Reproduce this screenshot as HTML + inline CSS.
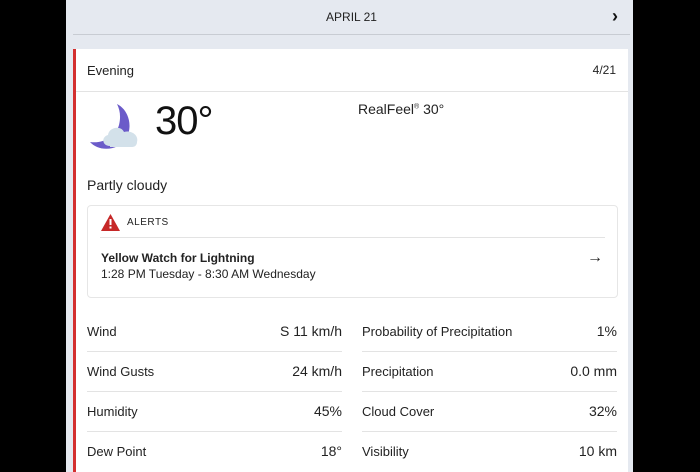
<!DOCTYPE html>
<html><head><style>
*{margin:0;padding:0;box-sizing:border-box}
html,body{width:700px;height:472px;overflow:hidden}
body{background:#000;font-family:"Liberation Sans",sans-serif;color:#222;position:relative}
.g{position:absolute;left:66px;top:0;width:567px;height:472px;background:#e5e9f0}
.hd{position:absolute;left:73px;top:0;width:557px;height:35px;border-bottom:1px solid #c8ccd3;text-align:center;font-size:12px;line-height:35px;color:#222}
.chev{position:absolute;right:12px;top:-1px;font-size:18px;font-weight:bold;color:#111}
.card{position:absolute;left:73px;top:49px;width:555px;height:423px;background:#fff;border-left:3px solid #d32f2f}
.t{position:absolute;font-size:13px}
.line{position:absolute;height:1px;background:#e3e3e3}
</style></head><body>
<div class="g"></div>
<div class="hd">APRIL 21<span class="chev">&#x203A;</span></div>
<div class="card">
<div class="t" style="left:11px;top:14px">Evening</div>
<div class="t" style="right:12px;top:14px;font-size:12px">4/21</div>
<div class="line" style="left:0;right:0;top:42px"></div>
<svg style="position:absolute;left:12px;top:53px" width="56" height="50" viewBox="0 0 56 50">
<path d="M29 2 C45 10 46 36 30 44 C20 49 8 47 2 40 C16 42 28 34 31 23 C33 15 32 8 29 2Z" fill="#6b5bc9"/>
<path d="M22 44 C14 44 13 35 20 33 C21 25 33 23 36 30 C43 28 51 33 49 40 C49 43 47 45 44 45 L22 45Z" fill="#d3e1ea"/>
</svg>
<div class="t" style="left:79px;top:50px;font-size:40px;color:#111;letter-spacing:-1px">30°</div>
<div class="t" style="left:282px;top:52px;font-size:14px">RealFeel<sup style="font-size:7px">®</sup> 30°</div>
<div class="t" style="left:11px;top:128px;font-size:14px">Partly cloudy</div>
<div style="position:absolute;left:11px;top:156px;width:531px;height:93px;border:1px solid #e6e6e6;border-radius:4px">
<svg style="position:absolute;left:13px;top:8px" width="19" height="17" viewBox="0 0 19 17"><path d="M9.5 0 L19 17 L0 17Z" fill="#c62828"/><rect x="8.5" y="5" width="2" height="6" fill="#fff"/><rect x="8.5" y="12.5" width="2" height="2" fill="#fff"/></svg>
<div class="t" style="left:39px;top:11px;font-size:10px;letter-spacing:.5px">ALERTS</div>
<div class="line" style="left:12px;right:12px;top:31px"></div>
<div class="t" style="left:13px;top:45px;font-size:12px;font-weight:bold">Yellow Watch for Lightning</div>
<div class="t" style="left:13px;top:61px;font-size:12px">1:28 PM Tuesday - 8:30 AM Wednesday</div>
<div class="t" style="right:14px;top:43px;font-size:16px;font-weight:bold">&#x2192;</div>
</div>
<div class="t" style="left:11px;top:275px">Wind</div><div class="t" style="left:11px;width:255px;top:274px;text-align:right;font-size:14px">S 11 km/h</div>
<div class="t" style="left:11px;top:315px">Wind Gusts</div><div class="t" style="left:11px;width:255px;top:314px;text-align:right;font-size:14px">24 km/h</div>
<div class="t" style="left:11px;top:355px">Humidity</div><div class="t" style="left:11px;width:255px;top:354px;text-align:right;font-size:14px">45%</div>
<div class="t" style="left:11px;top:395px">Dew Point</div><div class="t" style="left:11px;width:255px;top:394px;text-align:right;font-size:14px">18°</div>
<div class="t" style="left:286px;top:275px">Probability of Precipitation</div><div class="t" style="left:286px;width:255px;top:274px;text-align:right;font-size:14px">1%</div>
<div class="t" style="left:286px;top:315px">Precipitation</div><div class="t" style="left:286px;width:255px;top:314px;text-align:right;font-size:14px">0.0 mm</div>
<div class="t" style="left:286px;top:355px">Cloud Cover</div><div class="t" style="left:286px;width:255px;top:354px;text-align:right;font-size:14px">32%</div>
<div class="t" style="left:286px;top:395px">Visibility</div><div class="t" style="left:286px;width:255px;top:394px;text-align:right;font-size:14px">10 km</div>
<div class="line" style="left:11px;width:255px;top:302px"></div><div class="line" style="left:286px;width:255px;top:302px"></div>
<div class="line" style="left:11px;width:255px;top:342px"></div><div class="line" style="left:286px;width:255px;top:342px"></div>
<div class="line" style="left:11px;width:255px;top:382px"></div><div class="line" style="left:286px;width:255px;top:382px"></div>
</div>
</body></html>
